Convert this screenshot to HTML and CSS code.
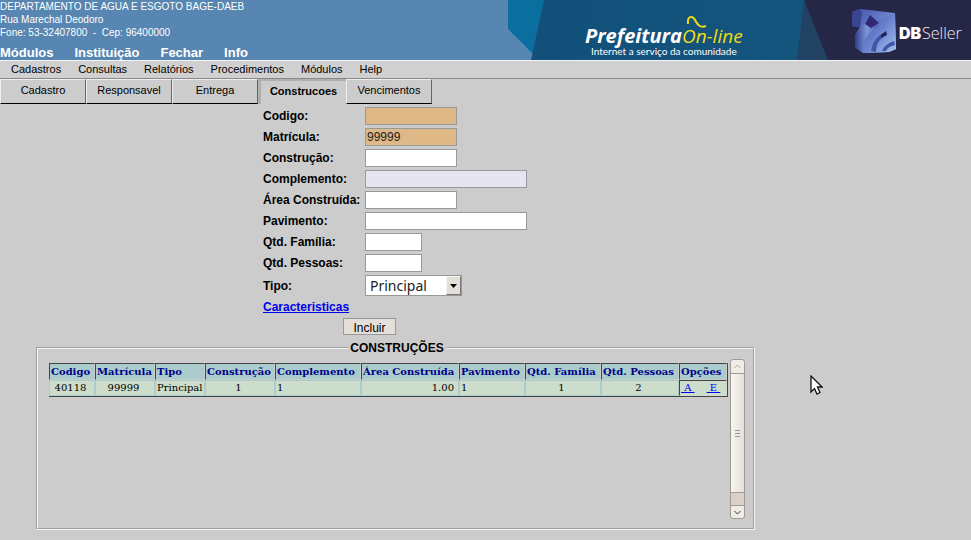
FILE: index.html
```
<!DOCTYPE html>
<html lang="pt-BR">
<head>
<meta charset="utf-8">
<title>Prefeitura On-line</title>
<link rel="stylesheet" href="styles.css">
</head>
<body>
<header class="header">
  <div class="org">
    <p>DEPARTAMENTO DE AGUA E ESGOTO BAGE-DAEB</p>
    <p>Rua Marechal Deodoro</p>
    <p>Fone: 53-32407800 &nbsp;-&nbsp; Cep: 96400000</p>
    <nav class="modules">
      <a href="#">Módulos</a><a href="#">Instituição</a><a href="#">Fechar</a><a href="#">Info</a>
    </nav>
  </div>
  <svg class="banner" viewBox="0 0 463 60" role="img" aria-label="Prefeitura On-line, DBSeller">
    <defs>
      <linearGradient id="cube" x1="0" y1="0" x2="1" y2="1">
        <stop offset="0" stop-color="#4452a5"/><stop offset=".5" stop-color="#6b82cf"/><stop offset="1" stop-color="#a6c3ef"/>
      </linearGradient>
      <linearGradient id="front" x1="0" y1="0" x2="1" y2="0">
        <stop offset="0" stop-color="#303d8c"/><stop offset=".5" stop-color="#7d97db"/><stop offset="1" stop-color="#445ab5"/>
      </linearGradient>
      <linearGradient id="sea" x1="0" y1="0" x2="1" y2="0">
        <stop offset="0" stop-color="#12507a"/><stop offset="1" stop-color="#15587f"/>
      </linearGradient>
    </defs>
    <path d="M0 0H463V60H31L0 29Z" fill="#0a6f9f"/>
    <path d="M0 29L23 60H0Z" fill="#5786b2"/>
    <path d="M36 0H463V60H23Z" fill="url(#sea)"/>
    <path d="M296 0H463V60H289Z" fill="#214262"/>
    <path d="M296 0H463V60H320Z" fill="#262647"/>
    <text class="brand" x="77" y="43">Prefeitura</text>
    <text class="brand-line" x="174" y="43">On-line</text>
    <path d="M180 24C179 15 185 16 187 20C190 26 193 28 198 26" fill="none" stroke="#f2dc10" stroke-width="2"/>
    <text class="slogan" x="83" y="55">Internet a serviço da comunidade</text>
    <path d="M344 12L352 9L387 13L388 49L381 52L355 53L347 47L347 35L352 27L344 26Z" fill="url(#cube)"/>
    <path d="M344 12L352 9L354 13L352 28L344 26Z" fill="#39468f"/>
    <path d="M355 53C354 39 359 32 371 26L367 22L387 13L388 49L381 52Z" fill="url(#cube)"/>
    <path d="M347 35C350 29 356 24 362 19L371 26C360 32 354 40 356 53L347 47Z" fill="url(#front)"/>
    <path d="M362 15L371 23L363 28L357 24Z" fill="#302874"/>
    <path d="M363 51C365 41 369 36 377 32L379 35C371 39 368 44 368 52ZM374 51C376 46 380 43 386 41L387 45C382 46 379 48 378 51Z" fill="#4055a8"/>
    <path d="M373 35L378 31L379 35C376 36 375 37 373 38Z" fill="#222553"/>
    <text class="db" x="391" y="39">DB</text>
    <text class="seller" x="414" y="39">Seller</text>
  </svg>
</header>
<nav class="menu">
  <a href="#">Cadastros</a><a href="#">Consultas</a><a href="#">Relatórios</a><a href="#">Procedimentos</a><a href="#">Módulos</a><a href="#">Help</a>
</nav>
<div class="tabs">
  <button type="button">Cadastro</button><button type="button">Responsavel</button><button type="button">Entrega</button><button type="button" class="active">Construcoes</button><button type="button">Vencimentos</button>
</div>
<main class="content">
  <form>
    <div class="fields">
      <label for="codigo">Codigo:</label><input id="codigo" class="medium locked" readonly>
      <label for="matricula">Matrícula:</label><input id="matricula" class="medium locked" value="99999" readonly>
      <label for="construcao">Construção:</label><input id="construcao" class="medium">
      <label for="complemento">Complemento:</label><input id="complemento" class="wide optional">
      <label for="area">Área Construída:</label><input id="area" class="medium">
      <label for="pavimento">Pavimento:</label><input id="pavimento" class="wide">
      <label for="familia">Qtd. Família:</label><input id="familia" class="short">
      <label for="pessoas">Qtd. Pessoas:</label><input id="pessoas" class="short">
      <label for="tipo">Tipo:</label>
      <div class="select">
        <select id="tipo"><option>Principal</option></select>
        <span class="arrow"><svg viewBox="0 0 7 4"><path d="M0 0H7L3.5 4Z"/></svg></span>
      </div>
      <a class="features" href="#">Caracteristicas</a>
    </div>
    <div class="actions"><button type="button">Incluir</button></div>
  </form>
  <fieldset>
    <legend>CONSTRUÇÕES</legend>
    <div class="list">
      <table>
        <colgroup><col class="c46"><col class="c60"><col class="c50"><col class="c70"><col class="c86"><col class="c98"><col class="c66"><col class="c76"><col class="c78"><col class="c48"></colgroup>
        <thead>
          <tr><th>Codigo</th><th>Matrícula</th><th>Tipo</th><th>Construção</th><th>Complemento</th><th>Área Construída</th><th>Pavimento</th><th>Qtd. Família</th><th>Qtd. Pessoas</th><th>Opções</th></tr>
        </thead>
        <tbody>
          <tr><td class="center">40118</td><td class="center">99999</td><td class="center">Principal</td><td class="center">1</td><td>1</td><td class="right">1.00</td><td>1</td><td class="center">1</td><td class="center">2</td><td class="options"><a href="#">&nbsp;A&nbsp;</a><a href="#">&nbsp;E&nbsp;</a></td></tr>
        </tbody>
      </table>
      <div class="scrollbar">
        <div class="cap"><svg viewBox="0 0 7 5"><path d="M.5 4L3.5 1L6.5 4" stroke="#b5afa8"/></svg></div>
        <div class="thumb"><i></i><i></i><i></i></div>
        <div class="track"></div>
        <div class="cap last"><svg viewBox="0 0 7 5"><path d="M.5 1L3.5 4L6.5 1" stroke="#333"/></svg></div>
      </div>
    </div>
  </fieldset>
</main>
<svg class="cursor" viewBox="0 0 13 20"><path d="M1 1V17L4.500 13.500L7 19L10 17.500L7.500 12H12Z" fill="#fff" stroke="#111" stroke-width="1.300"/></svg>
</body>
</html>
```
FILE: styles.css
```
* {
  box-sizing: border-box;
}

body {
  margin: 0;
  background: #ccc;
  color: #000;
  font: 12px/14px "Liberation Sans", Arial, sans-serif;
}

input, select, button {
  margin: 0;
  font: inherit;
  color: inherit;
}

/* Header */

.header {
  display: flex;
  justify-content: space-between;
  height: 60px;
  overflow: hidden;
  background: #5786b2;
  color: #fff;
}

.org p {
  margin: 0;
  font-size: 10px;
  line-height: 13px;
  white-space: nowrap;
}

.modules {
  display: flex;
  gap: 21px;
  padding-top: 7px;
  font-size: 13px;
  font-weight: bold;
}

.modules a {
  color: #fff;
  text-decoration: none;
}

.banner {
  flex: none;
  width: 463px;
  height: 60px;
}

.brand {
  font: italic bold 20px "Open Sans", sans-serif;
  fill: #fff;
}

.brand-line {
  font: italic 19px "Open Sans", sans-serif;
  fill: #f2dc10;
}

.slogan {
  font: 10px Lato, sans-serif;
  fill: #fff;
}

.db {
  font: 900 16px Inter, sans-serif;
  fill: #fff;
}

.seller {
  font: 300 16px "Open Sans", sans-serif;
  fill: #eee;
}

/* Menu and tabs */

.menu {
  display: flex;
  gap: 17px;
  height: 19px;
  padding: 1px 11px;
  border-top: 1px solid #f5f5f5;
  border-bottom: 1px solid #888;
  background: #d0d0d0;
  font-size: 11px;
}

.menu a {
  color: #000;
  text-decoration: none;
}

.tabs {
  display: flex;
}

.tabs button {
  width: 86px;
  height: 25px;
  padding: 0 0 3px;
  border: 1px solid;
  border-color: #eee #666 #000 #eee;
  background: #ccc;
  font-size: 11px;
}

.tabs .active {
  width: 88px;
  border: 0 solid #b0b0b0;
  border-width: 2px 0 0 3px;
  font-weight: bold;
}

/* Form */

.content {
  max-width: 790px;
  padding: 3px 36px 11px;
}

.fields {
  display: grid;
  grid-template-columns: 98px 162px;
  gap: 3px 4px;
  justify-content: center;
  align-items: center;
  font-weight: bold;
  white-space: nowrap;
}

.fields input {
  height: 18px;
  padding: 0 1px;
  border: 1px solid #999;
  border-radius: 0;
  background: #fff;
  font-weight: normal;
  color: #222;
}

.fields .short {
  width: 57px;
}

.fields .medium {
  width: 92px;
}

.fields .wide {
  width: 162px;
}

.fields .locked {
  background: #deb887;
}

.fields .optional {
  background: #e6e4f1;
}

.select {
  display: flex;
  width: 97px;
  height: 21px;
  border: 1px solid #999;
  background: #fff;
}

.select select {
  flex: 1;
  min-width: 0;
  padding: 0 4px;
  border: 0;
  appearance: none;
  background: none;
  font: 14px/18px "Noto Sans", sans-serif;
  color: #222;
}

.arrow {
  display: grid;
  place-items: center;
  width: 15px;
  border: 1px solid;
  border-color: #f5f5f5 #777 #777 #f5f5f5;
  background: #e4dfd8;
}

.arrow svg {
  width: 7px;
  height: 4px;
}

.features {
  justify-self: start;
  line-height: 16px;
  color: #00e;
}

.actions {
  display: flex;
  justify-content: center;
  padding: 3px 51px 0 0;
}

.actions button {
  width: 53px;
  height: 17px;
  padding: 2px 0 0;
  border: 1px solid #999;
  background: #e4dfd8;
  line-height: 14px;
}

/* List of buildings */

fieldset {
  min-width: 0;
  margin: 6px -1px 0 0;
  padding: 4px 8px 9px 11px;
  border: 2px groove #f5f5f5;
}

legend {
  margin: 0 auto;
  padding: 0 2px;
  font-weight: bold;
}

.list {
  display: flex;
  justify-content: space-between;
  align-items: flex-start;
  height: 160px;
}

table {
  width: 679px;
  margin-top: 4px;
  border: solid #444;
  border-width: 0 1px 1px 0;
  border-spacing: 0;
  table-layout: fixed;
  font: 10px/14px "DejaVu Serif", serif;
  white-space: nowrap;
}

th {
  height: 17px;
  padding: 0 1px;
  border: 1px solid;
  border-color: #444 #ccc #ccc #444;
  background: #acc;
  color: #008;
  text-align: left;
}

td {
  height: 16px;
  padding: 0 1px;
  border: 1px solid #acc;
  background: #cdc;
}

.center {
  padding-right: 4px;
  text-align: center;
}

.right {
  padding-right: 4px;
  text-align: right;
}

.options {
  border-color: #444 #cdc #cdc #444;
}

.options a {
  margin-right: 12px;
  color: #00e;
}

.options a:last-child {
  margin-right: 0;
}

.c46 { width: 46px; }
.c48 { width: 48px; }
.c50 { width: 50px; }
.c60 { width: 60px; }
.c66 { width: 66px; }
.c70 { width: 70px; }
.c76 { width: 76px; }
.c78 { width: 78px; }
.c86 { width: 86px; }
.c98 { width: 98px; }

.scrollbar {
  display: flex;
  flex-direction: column;
  width: 15px;
  height: 160px;
  border: 1px solid #a09a90;
  border-radius: 3px;
  background: #f0ece8;
}

.cap {
  display: grid;
  place-items: center;
  height: 13px;
}

.cap svg {
  width: 7px;
  height: 5px;
  fill: none;
  stroke-width: 1;
}

.thumb {
  display: flex;
  flex: 1;
  flex-direction: column;
  justify-content: center;
  align-items: center;
  gap: 2px;
  border: solid #a09a90;
  border-width: 1px 0;
  background: linear-gradient(to right, #f7f5f3, #e4dfd9);
}

.thumb i {
  width: 5px;
  height: 1px;
  background: #999;
}

.track {
  height: 12px;
  background: #d9d0ca;
}

.last {
  border-top: 1px solid #a09a90;
}

/* Mouse pointer over the page */

.cursor {
  position: absolute;
  top: 375px;
  left: 810px;
  width: 13px;
  height: 20px;
}
```
